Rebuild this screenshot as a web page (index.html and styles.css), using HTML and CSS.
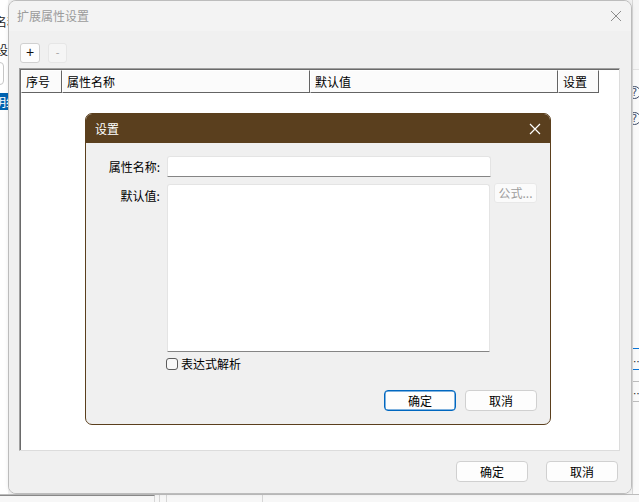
FILE: index.html
```html
<!DOCTYPE html>
<html lang="zh-CN">
<head>
<meta charset="utf-8">
<title>扩展属性设置</title>
<link rel="stylesheet" href="styles.css">
</head>
<body>
<div class="desktop">
  <div class="bg-left">
    <div class="frag frag-name">名称</div>
    <div class="frag frag-set">设置</div>
    <div class="frag-input"></div>
    <div class="frag-sel">明细</div>
  </div>
  <div class="bg-mid"></div>
  <div class="bg-right">
    <div class="r-top"></div>
    <div class="r-help r-help1">?</div>
    <div class="r-help r-help2">?</div>
    <div class="r-line r-blue r-l1"></div>
    <div class="r-dots r-d1">…</div>
    <div class="r-line r-blue r-l2"></div>
    <div class="r-line r-gray r-l3"></div>
    <div class="r-dots r-d2">…</div>
    <div class="r-line r-gray r-l4"></div>
  </div>
  <div class="bg-bottom">
    <div class="bb bb1"></div>
    <div class="bb bb2"></div>
    <div class="bb bb3"></div>
    <div class="bb bb4"></div>
  </div>

  <div class="window">
    <div class="win-title">
      <span class="win-title-text">扩展属性设置</span>
      <svg class="win-close" width="12" height="12" viewBox="0 0 12 12"><path d="M1 1 L11 11 M11 1 L1 11" stroke="#8c8c8c" stroke-width="1" fill="none"/></svg>
    </div>
    <div class="win-body">
      <div class="toolbar">
        <div class="tbtn">+</div>
        <div class="tbtn tbtn-dis">-</div>
      </div>
      <div class="grid">
        <div class="grid-head">
          <div class="hcell c1">序号</div>
          <div class="hcell c2">属性名称</div>
          <div class="hcell c3">默认值</div>
          <div class="hcell c4">设置</div>
        </div>
      </div>
      <div class="win-buttons">
        <div class="btn">确定</div>
        <div class="btn">取消</div>
      </div>
    </div>
  </div>

  <div class="dialog">
    <div class="dlg-title">
      <span class="dlg-title-text">设置</span>
      <svg class="dlg-close" width="12" height="12" viewBox="0 0 12 12"><path d="M1 1 L11 11 M11 1 L1 11" stroke="#ffffff" stroke-width="1.2" fill="none"/></svg>
    </div>
    <div class="dlg-body">
      <div class="form-row row-name">
        <div class="flabel">属性名称:</div>
        <div class="field field-line"></div>
      </div>
      <div class="form-row row-value">
        <div class="flabel flabel-top">默认值:</div>
        <div class="field field-area"></div>
        <div class="formula-btn">公式...</div>
      </div>
      <div class="check-row">
        <div class="checkbox"></div>
        <span class="check-text">表达式解析</span>
      </div>
      <div class="dlg-buttons">
        <div class="btn btn-default">确定</div>
        <div class="btn">取消</div>
      </div>
    </div>
  </div>
</div>
</body>
</html>
```
FILE: styles.css
```css
* { box-sizing: border-box; }
html, body { margin: 0; padding: 0; }
body {
  font-family: "Noto Sans CJK SC", "Noto Sans", sans-serif;
  font-size: 12px;
  color: #000;
  background: #ffffff;
}
.desktop {
  position: relative;
  width: 639px;
  height: 502px;
  overflow: hidden;
  display: grid;
  grid-template-columns: 8px 1fr 7px;
  grid-template-rows: 494px 8px;
  background: #ffffff;
}

/* background application fragments */
.bg-left {
  overflow: hidden;
  background: #ffffff;
  padding-top: 15px;
}
.frag {
  line-height: 14px;
  white-space: nowrap;
  margin-left: -5px;
  color: #222;
}
.frag-set { margin-top: 14px; margin-left: -4px; }
.frag-input {
  margin-top: 5px;
  margin-left: -20px;
  width: 24px;
  height: 23px;
  border: 1px solid #c6c6c6;
  border-radius: 4px;
  background: #fff;
}
.frag-sel {
  margin-top: 8px;
  height: 17px;
  line-height: 17px;
  background: #0063b1;
  color: #fff;
  white-space: nowrap;
  margin-left: 0;
  text-indent: -6px;
  overflow: hidden;
}
.bg-mid { background: #f3f3f3; }
.bg-right {
  overflow: hidden;
  background: #fafafa;
  border-left: 1px solid #d8d8d8;
}
.r-top { height: 70px; border-bottom: 1px solid #e2e2e2; background: #f5f5f5; }
.r-help {
  width: 13px;
  height: 13px;
  margin-left: -5px;
  border: 1px solid #3c4a66;
  border-radius: 50%;
  font-family: "DejaVu Sans", sans-serif;
  font-size: 10px;
  line-height: 11px;
  text-align: center;
  color: #3c4a66;
}
.r-help1 { margin-top: 16px; }
.r-help2 { margin-top: 13px; }
.r-line { height: 1px; }
.r-blue { background: #0a74d6; }
.r-gray { background: #bdbdbd; }
.r-l1 { margin-top: 223px; }
.r-dots {
  height: 12px;
  line-height: 12px;
  font-size: 10px;
  color: #222;
  margin-top: 7px;
  margin-left: 0;
}
.r-l2 { margin-top: 1px; }
.r-l3 { margin-top: 11px; }
.r-d2 { margin-top: 6px; }
.r-l4 { margin-top: 1px; }
.bg-bottom {
  grid-column: 1 / 4;
  background: #f7f7f7;
  border-top: 1px solid #bdbdbd;
  position: relative;
  display: flex;
}
.bb { height: 8px; border-right: 1px solid #d6d6d6; }
.bb1 { width: 155px; border-top: 1px solid #8a8a8a; }
.bb2 { width: 5px; }
.bb3 { width: 7px; }
.bb4 { width: 96px; }

/* main window */
.window {
  position: absolute;
  left: 8px;
  top: 0;
  width: 624px;
  height: 494px;
  border: 1px solid #bcbcbc;
  border-radius: 8px;
  overflow: hidden;
  display: flex;
  flex-direction: column;
  background: #f0f0f0;
  box-shadow: 0 0 4px rgba(0,0,0,0.08);
}
.win-title {
  height: 30px;
  flex: none;
  background: #f3f3f3;
  display: flex;
  align-items: center;
  justify-content: space-between;
  padding: 0 9px 0 8px;
}
.win-title-text {
  color: #9b9b9b;
  font-size: 12px;
  line-height: 14px;
}
.win-close { display: block; }
.win-body {
  flex: 1;
  display: flex;
  flex-direction: column;
  padding: 12px 11px 11px 10px;
  background: #f0f0f0;
}
.toolbar {
  display: flex;
  gap: 8px;
  margin-left: 1px;
  height: 20px;
}
.tbtn {
  width: 20px;
  height: 20px;
  border: 1px solid #d0d0d0;
  border-radius: 3px;
  background: #fdfdfd;
  text-align: center;
  line-height: 17px;
  font-family: "Liberation Sans", sans-serif;
  font-size: 14px;
  color: #111;
}
.tbtn-dis {
  width: 19px;
  background: #f5f5f5;
  border-color: #e6e6e6;
  color: #a8a8a8;
  font-size: 11px;
}
.grid {
  margin-top: 5px;
  height: 383px;
  flex: none;
  background: #ffffff;
  border: 1px solid;
  border-color: #a0a0a0 #dcdcdc #dcdcdc #a0a0a0;
  box-shadow: inset 1px 1px 0 #6a6a6a;
  padding: 1px 0 0 1px;
}
.grid-head { display: flex; height: 23px; }
.hcell {
  height: 23px;
  line-height: 21px;
  padding-left: 4px;
  background: #fbfbfb;
  border-right: 1px solid #646464;
  border-bottom: 1px solid #646464;
  border-left: 1px solid #ffffff;
  border-top: 1px solid #ffffff;
  color: #000;
  white-space: nowrap;
}
.c1 { width: 41px; }
.c2 { width: 248px; }
.c3 { width: 248px; }
.c4 { width: 41px; }
.win-buttons {
  margin-top: 10px;
  display: flex;
  justify-content: flex-end;
  gap: 18px;
  padding-right: 2px;
}
.btn {
  width: 72px;
  height: 21px;
  border: 1px solid #d0d0d0;
  border-radius: 4px;
  background: #fdfdfd;
  text-align: center;
  line-height: 19px;
  color: #000;
}
.btn-default { border-color: #0067c0; box-shadow: inset 0 0 0 0.5px #0067c0; }

/* modal dialog */
.dialog {
  position: absolute;
  left: 85px;
  top: 113px;
  width: 466px;
  height: 312px;
  border: 1px solid #5b3f1d;
  border-radius: 7px;
  overflow: hidden;
  background: #f0f0f0;
  display: flex;
  flex-direction: column;
}
.dlg-title {
  height: 29px;
  flex: none;
  background: #5a3f1e;
  display: flex;
  align-items: center;
  justify-content: space-between;
  padding: 0 9px 0 9px;
}
.dlg-title-text { color: #ffffff; line-height: 14px; }
.dlg-close { display: block; }
.dlg-body {
  flex: 1;
  display: flex;
  flex-direction: column;
  padding: 13px 13px 13px 0;
}
.form-row { display: flex; }
.row-name { height: 21px; align-items: center; }
.row-value { margin-top: 7px; height: 168px; align-items: flex-start; }
.flabel {
  width: 74px;
  text-align: right;
  line-height: 14px;
  margin-right: 7px;
  white-space: nowrap;
}
.flabel-top { margin-top: 5px; }
.field {
  width: 324px;
  background: #ffffff;
  border: 1px solid #e4e4e4;
  border-bottom: 1px solid #858585;
  border-radius: 3px 3px 0 0;
}
.field-line { height: 21px; }
.field-area { height: 168px; }
.formula-btn {
  margin-left: 4px;
  margin-top: -1px;
  width: 43px;
  height: 20px;
  border: 1px solid #e8e8e8;
  border-radius: 3px;
  background: #fbfbfb;
  color: #9d9d9d;
  line-height: 18px;
  text-align: center;
  white-space: nowrap;
  font-size: 12px;
}
.check-row {
  margin-top: 6px;
  height: 12px;
  display: flex;
  align-items: center;
  padding-left: 80px;
}
.checkbox {
  width: 12px;
  height: 12px;
  border: 1px solid #5c5c5c;
  border-radius: 3px;
  background: #f8f8f8;
  flex: none;
}
.check-text { margin-left: 3px; line-height: 14px; }
.dlg-buttons {
  margin-top: 20px;
  display: flex;
  justify-content: flex-end;
  gap: 9px;
}
```
